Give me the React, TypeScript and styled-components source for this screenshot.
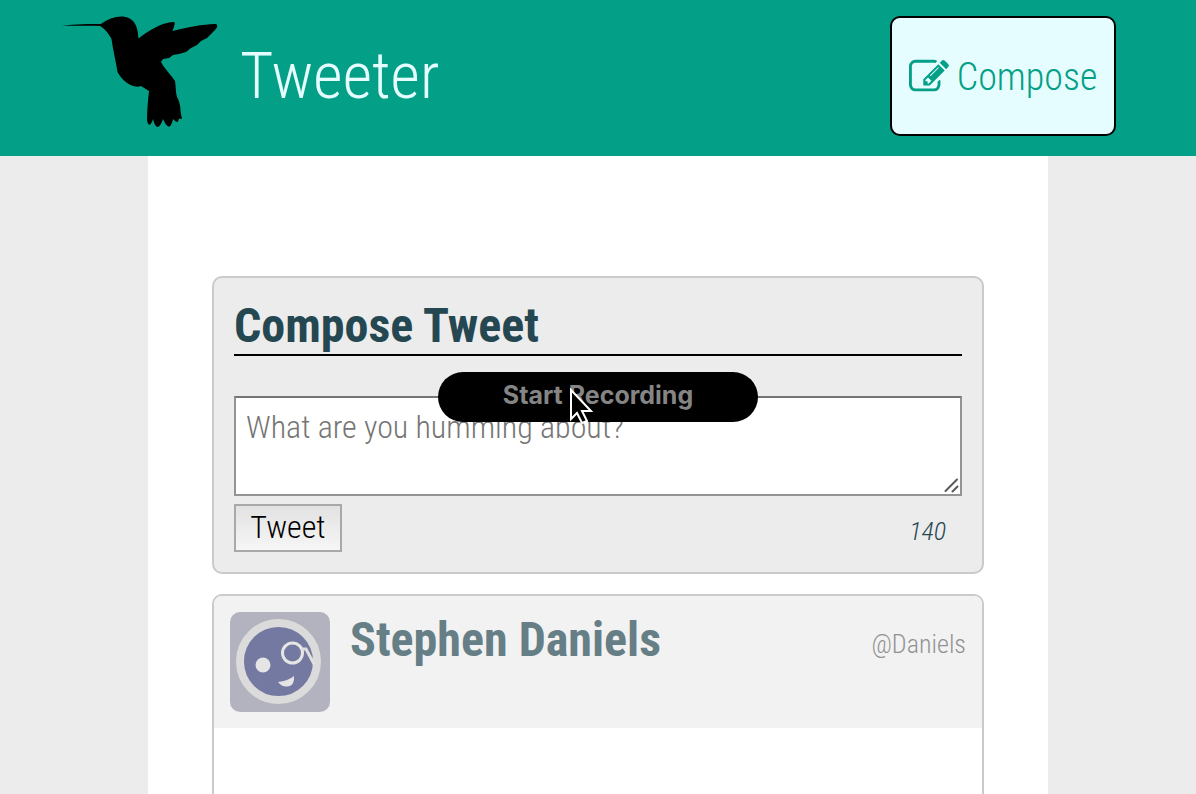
import React, { useState } from "react";
import styled, { createGlobalStyle } from "styled-components";

const GlobalStyle = createGlobalStyle`
  *, *::before, *::after { box-sizing: border-box; }
  body {
    margin: 0;
    background: #ececec;
    color: #244751;
    font-family: "Roboto Condensed", "Liberation Sans Narrow", "Roboto", sans-serif;
    font-weight: 300;
    overflow-x: hidden;
  }
  button, textarea { font-family: inherit; font-weight: inherit; }
`;

const Nav = styled.nav`
  display: flex;
  align-items: center;
  height: 156px;
  padding: 16px 80px 20px 60px;
  background: #039f86;
`;

const Logo = styled.svg`
  width: 160px;
  height: 120px;
  flex: none;
`;

const Brand = styled.a`
  margin-left: 20px;
  padding-top: 2px;
  color: #e6fdff;
  font-size: 64px;
  line-height: 76px;
  text-decoration: none;
`;

const ComposeButton = styled.button`
  display: flex;
  align-items: center;
  justify-content: center;
  gap: 8px;
  width: 226px;
  height: 120px;
  margin-left: auto;
  padding: 2px 0 0;
  border: 2px solid #000;
  border-radius: 10px;
  background: #e6fdff;
  color: #039f86;
  font-size: 38px;
  line-height: 48px;
`;

const ComposeIcon = styled.svg`
  width: 40px;
  height: 40px;
  fill: currentColor;
`;

const Main = styled.main`
  display: flex;
  flex-direction: column;
  gap: 20px;
  max-width: 900px;
  min-height: calc(100vh - 156px);
  margin: 0 auto;
  padding: 120px 64px 0;
  background: #fff;
`;

const Panel = styled.section`
  padding: 20px;
  border: 2px solid #cacaca;
  border-radius: 10px;
  background: #ececec;
`;

const PanelTitle = styled.h2`
  margin: 0 0 40px;
  border-bottom: 2px solid #000;
  font-size: 48px;
  line-height: 56px;
  font-weight: 700;
`;

const TweetField = styled.div`
  position: relative;
`;

const TweetBox = styled.textarea`
  display: block;
  width: 100%;
  height: 100px;
  padding: 10px;
  border: 2px solid #949494;
  border-top-color: #757575;
  border-radius: 0;
  background: #fff;
  color: #000;
  font-size: 32px;
  line-height: 38px;
  resize: vertical;
  &::placeholder { color: #757575; opacity: 1; }
  &::-webkit-resizer { background: transparent; }
`;

const Grip = styled.svg`
  position: absolute;
  right: 3px;
  bottom: 3px;
  width: 15px;
  height: 15px;
  pointer-events: none;
`;

const FormFooter = styled.div`
  display: flex;
  align-items: center;
  justify-content: space-between;
  margin-top: 8px;
  padding-right: 16px;
`;

const SubmitButton = styled.button`
  width: 108px;
  height: 48px;
  padding: 0 0 2px;
  border: 2px solid #a9a9a9;
  background: linear-gradient(#e2e2e2, #f6f6f6);
  color: #000;
  font-size: 32px;
  line-height: 40px;
`;

const Counter = styled.output`
  padding-top: 6px;
  font-size: 26px;
  line-height: 32px;
  font-style: italic;
  font-weight: 300;
`;

const Tweet = styled.article`
  height: 400px;
  border: 2px solid #cacaca;
  border-radius: 10px;
  overflow: hidden;
`;

const TweetHeader = styled.header`
  display: flex;
  align-items: flex-start;
  padding: 16px;
  background: #f2f2f2;
`;

const Avatar = styled.svg`
  width: 100px;
  height: 100px;
  flex: none;
`;

const Author = styled.h2`
  margin: 0 auto 0 20px;
  color: #667e85;
  font-size: 48px;
  line-height: 56px;
  font-weight: 700;
`;

const Handle = styled.span`
  margin-top: 16px;
  color: #929292;
  font-size: 26px;
  line-height: 32px;
`;

const RecordOverlay = styled.div`
  position: absolute;
  top: 372px;
  left: 50%;
  width: 320px;
  margin-left: -160px;
`;

const RecordButton = styled.button`
  display: block;
  width: 100%;
  height: 50px;
  padding: 0 0 4px;
  border: 0;
  border-radius: 25px;
  background: #000;
  color: #858585;
  font-family: "Inter", sans-serif;
  font-size: 25px;
  line-height: 32px;
  font-weight: 700;
`;

const Pointer = styled.svg`
  position: absolute;
  top: 15px;
  left: 130px;
  width: 28px;
  height: 40px;
  pointer-events: none;
`;

const LIMIT = 140;

export default function App() {
  const [text, setText] = useState("");

  return (
    <>
      <GlobalStyle />
      <Nav>
        <Logo viewBox="60 15 160 120" aria-hidden="true">
          <path d="M62 24.800C75 23 90 23 101 23C107 18 116 15 123 15.500C136 17 138 28 138.500 37.500C149 29 165 20 174.500 21C175 24 173.500 27 172.500 30C187 26.500 206 22.500 216 23C219 25 216 28 213 31L207 37L201 40L197 44L191 47L186 51L179 53L173 54L169 57L163 58L161 61C164 67 171 74 175 80C176 86 175.500 91 177 96C181 103 180 108 181 113L182 118L179 117.500C178 122 177 122 173 118C171 127 168 129 163 118C160 127 156 130 153 118C151 125 148 126 147 119C147 109 148 99 149 90L141 85C133 88 122 80 117.500 71C116 61 113 49 111.500 38C108.500 32 104 27 100 25C88 24.500 75 25 62 24.800Z" />
        </Logo>
        <Brand href="#">Tweeter</Brand>
        <ComposeButton type="button">
          <ComposeIcon viewBox="0 0 1792 1792" aria-hidden="true">
            <path d="M888 1184l116-116-152-152-116 116v56h96v96h56zm440-720q-16-16-33 1l-350 350q-17 17-1 33t33-1l350-350q17-17 1-33zm80 594v190q0 119-84.500 203.500t-203.500 84.500h-832q-119 0-203.500-84.500t-84.500-203.500v-832q0-119 84.500-203.500t203.500-84.500h832q63 0 117 25 15 7 18 23 3 17-9 29l-49 49q-14 14-32 8-23-6-45-6h-832q-66 0-113 47t-47 113v832q0 66 47 113t113 47h832q66 0 113-47t47-113v-126q0-13 9-22l64-64q15-15 35-7t20 29zm-96-738l288 288-672 672h-288v-288zm444 132l-92 92-288-288 92-92q28-28 68-28t68 28l152 152q28 28 28 68t-28 68z" />
          </ComposeIcon>
          Compose
        </ComposeButton>
      </Nav>
      <Main>
        <Panel>
          <PanelTitle>Compose Tweet</PanelTitle>
          <form onSubmit={(e) => e.preventDefault()}>
            <TweetField>
              <TweetBox
                id="tweet-text"
                aria-label="Compose Tweet"
                placeholder="What are you humming about?"
                value={text}
                onChange={(e) => setText(e.target.value)}
              />
              <Grip viewBox="0 0 15 15" aria-hidden="true">
                <path d="M1.500 13L13 1.500M8.500 13.500L13.500 8.500" stroke="#5a5a5a" strokeWidth="2" strokeLinecap="round" />
              </Grip>
            </TweetField>
            <FormFooter>
              <SubmitButton type="submit">Tweet</SubmitButton>
              <Counter htmlFor="tweet-text">{LIMIT - text.length}</Counter>
            </FormFooter>
          </form>
        </Panel>
        <Tweet>
          <TweetHeader>
            <Avatar viewBox="0 0 100 100" aria-hidden="true">
              <rect width="100" height="100" rx="10" fill="#b3b3bf" />
              <circle cx="48.500" cy="49.500" r="38.500" fill="#7379a1" stroke="#dbdbdb" strokeWidth="8" />
              <circle cx="33" cy="53" r="7.500" fill="#e5e5e5" />
              <circle cx="62.500" cy="41" r="10" fill="none" stroke="#e5e5e5" strokeWidth="3" />
              <path d="M72 37L76 37L84 52" fill="none" stroke="#dfdfdf" strokeWidth="3" />
              <path d="M48 70Q58 69 64 64Q65 74 57 74.500Q52 75 48 70Z" fill="#e5e5e5" />
            </Avatar>
            <Author>Stephen Daniels</Author>
            <Handle>@Daniels</Handle>
          </TweetHeader>
        </Tweet>
      </Main>
      <RecordOverlay>
        <RecordButton type="button">Start Recording</RecordButton>
        <Pointer viewBox="0 0 28 40" aria-hidden="true">
          <path d="M3 3V32L9 26L14 36L19 34L14 24H23Z" fill="#000" stroke="#fff" strokeWidth="2" />
        </Pointer>
      </RecordOverlay>
    </>
  );
}
